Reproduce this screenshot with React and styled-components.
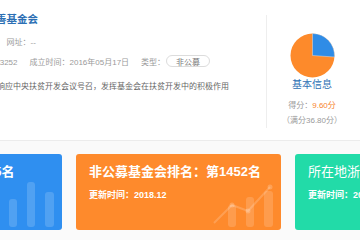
import React from "react";
import styled, { createGlobalStyle } from "styled-components";

const GlobalStyle = createGlobalStyle`
  html, body {
    margin: 0;
    padding: 0;
    background: #fafafa;
    overflow: hidden;
  }
  body {
    font-family: "Liberation Sans", "Noto Sans CJK SC", sans-serif;
  }
`;

const Page = styled.div`
  width: 643px;
  margin-left: -143px;
`;

const Panel = styled.section`
  display: grid;
  grid-template-columns: 62px 320px 90px;
  column-gap: 14px;
  height: 140px;
  background: #fff;
  border-bottom: 1px solid #ececec;
`;

const Logo = styled.div`
  margin-top: 14px;
  width: 62px;
  height: 62px;
  border-radius: 50%;
  background: #eef3f9;
`;

const Info = styled.div`
  display: flex;
  flex-direction: column;
  padding-top: 12px;
`;

const Title = styled.h1`
  margin: 0;
  font-size: 10.5px;
  line-height: 14px;
  font-weight: bold;
  color: #2c6fb4;
  white-space: nowrap;
`;

const MetaRow = styled.div`
  display: flex;
  align-items: center;
  gap: ${(p) => p.$gap}px;
  margin-top: ${(p) => p.$top}px;
  height: 12px;
  font-size: 8px;
  color: #9a9a9a;
  white-space: nowrap;
`;

const Pill = styled.span`
  display: inline-flex;
  align-items: center;
  height: 10px;
  padding: 0 9px;
  margin-left: 1px;
  border: 1px solid #dcdcdc;
  border-radius: 6px;
  color: #777;
`;

const Desc = styled.p`
  margin: 14px 0 0;
  font-size: 8px;
  line-height: 12px;
  color: #666;
  white-space: nowrap;
`;

const Side = styled.aside`
  display: flex;
  flex-direction: column;
  align-items: center;
  margin-top: 15px;
  height: 113px;
  border-left: 1px solid #eeeeee;
  margin-left: -1px;
`;

const Pie = styled.svg`
  margin-top: 18px;
  width: 45px;
  height: 45px;
`;

const SideTitle = styled.div`
  font-size: 10px;
  line-height: 14px;
  color: #2c6fb4;
`;

const Score = styled.div`
  margin-top: ${(p) => p.$top}px;
  font-size: 8px;
  line-height: 12px;
  color: #9a9a9a;
  white-space: nowrap;

  em {
    font-style: normal;
    color: #f7842d;
  }
`;

const Cards = styled.div`
  display: grid;
  grid-template-columns: repeat(3, 205px);
  gap: 14px;
  margin-top: 13px;
`;

const Card = styled.div`
  position: relative;
  height: 76px;
  padding: 9px 13px 0;
  box-sizing: border-box;
  border-radius: 3px;
  background: ${(p) => p.$bg};
  color: #fff;
  overflow: hidden;
`;

const CardTitle = styled.div`
  font-size: 13px;
  line-height: 18px;
  font-weight: ${(p) => (p.$bold ? 600 : 400)};
  white-space: nowrap;
`;

const CardSub = styled.div`
  margin-top: 8px;
  font-size: 9px;
  line-height: 12px;
  font-weight: 600;
  white-space: nowrap;
`;

const Deco = styled.svg`
  position: absolute;
  right: 7px;
  bottom: 3px;
  width: 62px;
  height: 48px;
`;

const angle = (9.6 / 36.8) * 2 * Math.PI;
const px = 22.5 + 22 * Math.sin(angle);
const py = 22.5 - 22 * Math.cos(angle);

const Bars = ({ tops }) => (
  <g fill="rgba(255,255,255,0.16)">
    <rect x="16" y={tops[0]} width="8" height={48 - tops[0]} rx="3" />
    <rect x="34" y={tops[1]} width="8" height={48 - tops[1]} rx="3" />
    <rect x="52" y={tops[2]} width="9" height={48 - tops[2]} rx="3" />
  </g>
);

export default function App() {
  return (
    <>
      <GlobalStyle />
      <Page>
        <Panel>
          <Logo />
          <Info>
            <Title>浙江省扶贫慈善基金会</Title>
            <MetaRow $top={9} $gap={14}>
              <span>电话：87654321</span>
              <span>网址：--</span>
            </MetaRow>
            <MetaRow $top={8} $gap={12}>
              <span>登记证号：3300003252</span>
              <span>成立时间：2016年05月17日</span>
              <span>
                类型：<Pill>非公募</Pill>
              </span>
            </MetaRow>
            <Desc>宗旨：本会为积极响应中央扶贫开发会议号召，发挥基金会在扶贫开发中的积极作用</Desc>
          </Info>
          <Side>
            <Pie viewBox="0 0 45 45">
              <circle cx="22.5" cy="22.5" r="22" fill="#fd8a2b" />
              <path
                d={`M22.5 22.5 L22.5 0.5 A22 22 0 0 1 ${px} ${py} Z`}
                fill="#2f8ce6"
                stroke="rgba(255,255,255,0.6)"
                strokeWidth="0.6"
              />
            </Pie>
            <SideTitle>基本信息</SideTitle>
            <Score $top={8}>
              得分：<em>9.60分</em>
            </Score>
            <Score $top={3}>（满分36.80分）</Score>
          </Side>
        </Panel>
        <Cards>
          <Card $bg="#2f8ff0">
            <CardTitle $bold>全国基金会排名：第35名</CardTitle>
            <CardSub>更新时间：2018.12</CardSub>
            <Deco viewBox="0 0 62 48">
              <Bars tops={[20, 3, 13]} />
            </Deco>
          </Card>
          <Card $bg="#fe8a2c">
            <CardTitle $bold>非公募基金会排名：第1452名</CardTitle>
            <CardSub>更新时间：2018.12</CardSub>
            <Deco viewBox="0 0 62 48">
              <Bars tops={[26, 18, 12]} />
              <polyline
                points="2,44 20,26 36,32 58,8"
                fill="none"
                stroke="rgba(255,255,255,0.18)"
                strokeWidth="2"
              />
              <g fill="rgba(255,255,255,0.2)">
                <circle cx="20" cy="26" r="2.5" />
                <circle cx="36" cy="32" r="2.5" />
                <circle cx="58" cy="8" r="2.5" />
              </g>
            </Deco>
          </Card>
          <Card $bg="#22dba8">
            <CardTitle>所在地浙江省排名：第86名</CardTitle>
            <CardSub>更新时间：2018.12</CardSub>
          </Card>
        </Cards>
      </Page>
    </>
  );
}
